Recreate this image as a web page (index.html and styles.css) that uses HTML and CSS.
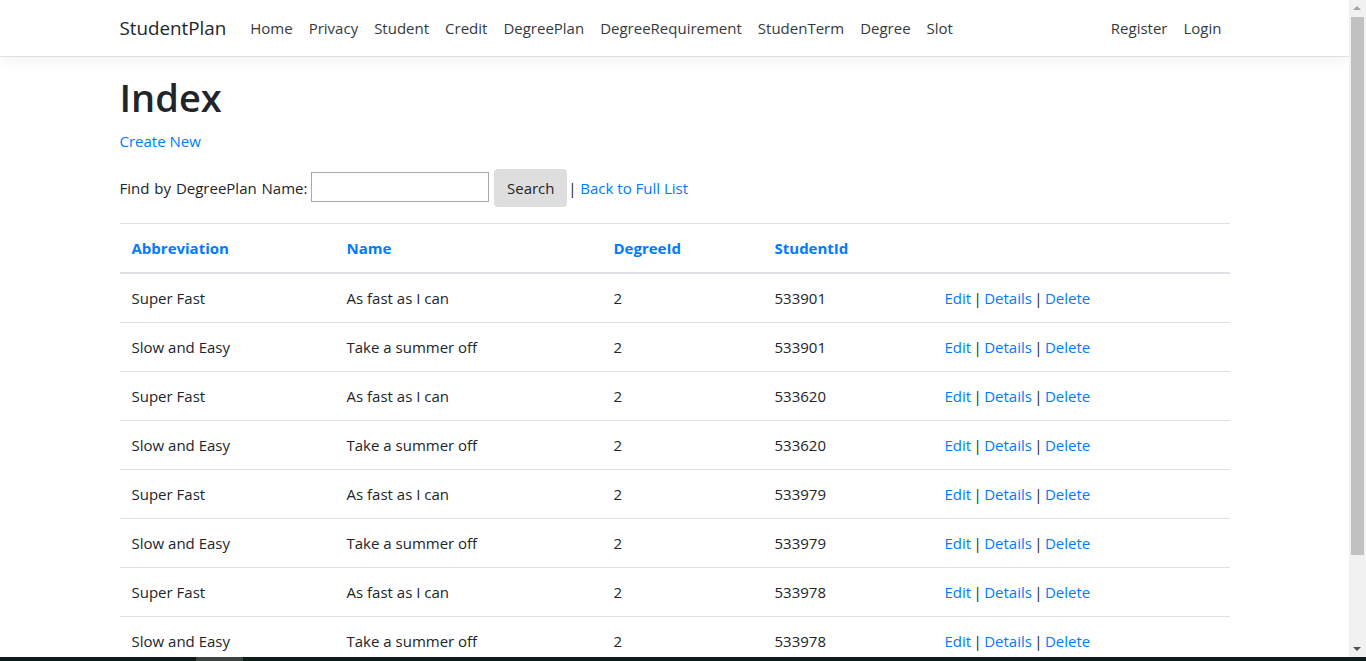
FILE: index.html
```html
<!DOCTYPE html>
<html lang="en">
<head>
<meta charset="utf-8">
<title>Index - StudentPlan</title>
<link rel="stylesheet" href="styles.css">
</head>
<body>
<div class="page">
  <header>
    <nav class="navbar">
      <div class="container nav-inner">
        <a class="brand" href="#">StudentPlan</a>
        <ul class="nav-list nav-main">
          <li><a class="nav-link" href="#">Home</a></li>
          <li><a class="nav-link" href="#">Privacy</a></li>
          <li><a class="nav-link" href="#">Student</a></li>
          <li><a class="nav-link" href="#">Credit</a></li>
          <li><a class="nav-link" href="#">DegreePlan</a></li>
          <li><a class="nav-link" href="#">DegreeRequirement</a></li>
          <li><a class="nav-link" href="#">StudenTerm</a></li>
          <li><a class="nav-link" href="#">Degree</a></li>
          <li><a class="nav-link" href="#">Slot</a></li>
        </ul>
        <ul class="nav-list">
          <li><a class="nav-link" href="#">Register</a></li>
          <li><a class="nav-link" href="#">Login</a></li>
        </ul>
      </div>
    </nav>
  </header>
  <div class="container">
    <main class="main">
      <h1 class="title">Index</h1>
      <p class="para"><a class="link" href="#">Create New</a></p>
      <form class="search-form">
        <p class="para"><span class="search-label">Find by DegreePlan Name:</span> <input class="search-input" type="text"> <button class="btn-search" type="submit">Search</button> | <a class="link" href="#">Back to Full List</a></p>
      </form>
      <table class="table">
        <thead>
          <tr>
            <th class="c1"><a class="link" href="#">Abbreviation</a></th>
            <th class="c2"><a class="link" href="#">Name</a></th>
            <th class="c3"><a class="link" href="#">DegreeId</a></th>
            <th class="c4"><a class="link" href="#">StudentId</a></th>
            <th class="c5"></th>
          </tr>
        </thead>
        <tbody>
          <tr><td>Super Fast</td><td>As fast as I can</td><td>2</td><td>533901</td><td class="actions"><a class="link" href="#">Edit</a> | <a class="link" href="#">Details</a> | <a class="link" href="#">Delete</a></td></tr>
          <tr><td>Slow and Easy</td><td>Take a summer off</td><td>2</td><td>533901</td><td class="actions"><a class="link" href="#">Edit</a> | <a class="link" href="#">Details</a> | <a class="link" href="#">Delete</a></td></tr>
          <tr><td>Super Fast</td><td>As fast as I can</td><td>2</td><td>533620</td><td class="actions"><a class="link" href="#">Edit</a> | <a class="link" href="#">Details</a> | <a class="link" href="#">Delete</a></td></tr>
          <tr><td>Slow and Easy</td><td>Take a summer off</td><td>2</td><td>533620</td><td class="actions"><a class="link" href="#">Edit</a> | <a class="link" href="#">Details</a> | <a class="link" href="#">Delete</a></td></tr>
          <tr><td>Super Fast</td><td>As fast as I can</td><td>2</td><td>533979</td><td class="actions"><a class="link" href="#">Edit</a> | <a class="link" href="#">Details</a> | <a class="link" href="#">Delete</a></td></tr>
          <tr><td>Slow and Easy</td><td>Take a summer off</td><td>2</td><td>533979</td><td class="actions"><a class="link" href="#">Edit</a> | <a class="link" href="#">Details</a> | <a class="link" href="#">Delete</a></td></tr>
          <tr><td>Super Fast</td><td>As fast as I can</td><td>2</td><td>533978</td><td class="actions"><a class="link" href="#">Edit</a> | <a class="link" href="#">Details</a> | <a class="link" href="#">Delete</a></td></tr>
          <tr><td>Slow and Easy</td><td>Take a summer off</td><td>2</td><td>533978</td><td class="actions"><a class="link" href="#">Edit</a> | <a class="link" href="#">Details</a> | <a class="link" href="#">Delete</a></td></tr>
        </tbody>
      </table>
    </main>
  </div>
</div>
<div class="scrollbar">
  <div class="sb-arrow sb-up"></div>
  <div class="sb-thumb"></div>
  <div class="sb-arrow sb-down"></div>
</div>
<div class="taskbar"><div class="task-item"></div></div>
</body>
</html>
```
FILE: styles.css
```css
*, *::before, *::after {
  box-sizing: border-box;
}
html {
  overflow: hidden;
  height: 100%;
}
body {
  margin: 0;
  font-family: "Open Sans", "Noto Sans", sans-serif;
  font-size: 15px;
  line-height: 24px;
  color: #212529;
  background: #fff;
}
.page {
  margin-right: 17px;
}
.container {
  max-width: 1140px;
  margin: 0 auto;
  padding: 0 15px;
}
.navbar {
  background: #fff;
  border-bottom: 1px solid #dee2e6;
  box-shadow: 0 .25rem .75rem rgba(0, 0, 0, .05);
  padding: 8px 0;
  margin-bottom: 16px;
}
.nav-inner {
  display: flex;
  align-items: center;
}
.brand {
  font-size: 18.8px;
  line-height: 30px;
  padding: 5px 0;
  margin-right: 16px;
  color: #212529;
  text-decoration: none;
}
.nav-list {
  list-style: none;
  margin: 0;
  padding: 0;
  display: flex;
}
.nav-main {
  flex: 1;
}
.nav-link {
  display: block;
  padding: 8px;
  color: #343a40;
  text-decoration: none;
}
.main {
  padding-bottom: 16px;
}
.title {
  font-size: 38px;
  font-weight: 600;
  line-height: 48px;
  margin: 0 0 8px;
}
.para {
  margin: 0 0 16px;
}
.link {
  color: #007bff;
  text-decoration: none;
}
.search-form {
  margin: 0;
}
.search-label {
  word-spacing: 1px;
}
.search-input {
  width: 178px;
  height: 30px;
  border: 1px solid #a9a9a9;
  padding: 1px 2px;
  font: inherit;
  vertical-align: 1px;
}
.btn-search {
  font: inherit;
  line-height: 24px;
  color: #212529;
  background: #dedede;
  border: 1px solid transparent;
  border-radius: 4px;
  padding: 6px 0;
  width: 73px;
  margin-left: 1px;
  margin-right: -3px;
}
.table {
  width: 100%;
  border-collapse: collapse;
  margin-bottom: 16px;
}
.table th,
.table td {
  padding: 12px;
  text-align: left;
  vertical-align: top;
  border-top: 1px solid #dee2e6;
}
.table th {
  font-weight: 700;
  border-bottom: 2px solid #dee2e6;
}
.table .actions {
  word-spacing: -1.5px;
}
.c1 { width: 215px; }
.c2 { width: 267px; }
.c3 { width: 161px; }
.c4 { width: 170px; }
.scrollbar {
  position: fixed;
  top: 0;
  right: 0;
  width: 17px;
  height: 657px;
  background: #f1f1f1;
}
.sb-arrow {
  position: absolute;
  left: 4px;
  width: 0;
  height: 0;
  border-left: 4px solid transparent;
  border-right: 4px solid transparent;
}
.sb-up {
  top: 6px;
  border-bottom: 4px solid #a3a3a3;
}
.sb-down {
  bottom: 6px;
  border-top: 4px solid #505050;
}
.sb-thumb {
  position: absolute;
  top: 17px;
  left: 2px;
  width: 13px;
  height: 538px;
  background: #c1c1c1;
}
.taskbar {
  position: fixed;
  left: 0;
  right: 0;
  bottom: 0;
  height: 4px;
  background: #0e1d19;
}
.task-item {
  position: absolute;
  left: 196px;
  width: 47px;
  height: 4px;
  background: #3a4541;
}
```
